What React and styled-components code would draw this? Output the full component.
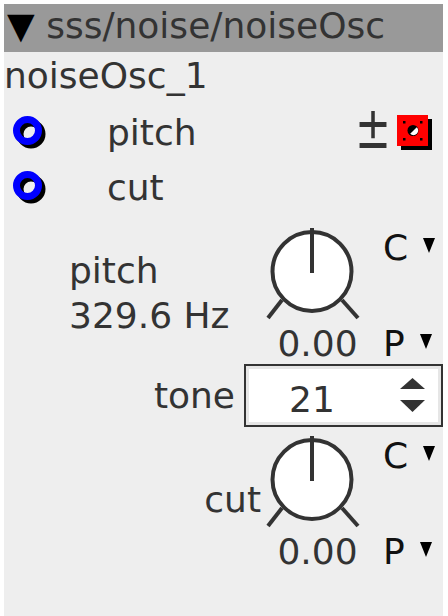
import React from "react";
import styled, { createGlobalStyle } from "styled-components";

const GlobalStyle = createGlobalStyle`
  html, body {
    margin: 0;
    padding: 0;
    background: #fff;
  }
  body {
    font-family: "DejaVu Sans", "Liberation Sans", sans-serif;
  }
`;

const Panel = styled.div`
  margin: 4px 0 0 4px;
  width: 439px;
  min-height: 612px;
  background: #eeeeee;
  color: #333;
  font-size: 36px;
  display: flex;
  flex-direction: column;
`;

const Header = styled.div`
  background: #999999;
  line-height: 43px;
  padding: 0 0 5px 3px;
  white-space: nowrap;
  span {
    color: #000;
  }
`;

const Name = styled.div`
  line-height: 40px;
  padding-top: 4px;
`;

const Ports = styled.div`
  margin-top: 9px;
`;

const PortRow = styled.div`
  height: 55px;
  display: flex;
  align-items: center;
  padding: 0 11px 0 9px;
`;

const PortLabel = styled.div`
  margin-left: 60px;
  line-height: 40px;
`;

const PortTools = styled.div`
  margin-left: auto;
  display: flex;
  align-items: center;
  gap: 6px;
`;

const PlusMinus = styled.span`
  display: inline-block;
  font-size: 43px;
  line-height: 40px;
  transform: scaleY(1.35);
  transform-origin: 50% 70%;
  margin-top: -4px;
`;

const KnobRow = styled.div`
  display: grid;
  grid-template-columns: 1fr 96px 83px;
  margin-top: ${(p) => p.$top}px;
`;

const KnobLabel = styled.div`
  align-self: start;
  line-height: ${(p) => p.$lh}px;
  padding-top: ${(p) => p.$pt}px;
  padding-left: ${(p) => p.$pl || 0}px;
  padding-right: ${(p) => p.$pr || 0}px;
  text-align: ${(p) => p.$align};
  white-space: nowrap;
`;

const KnobCol = styled.div`
  display: flex;
  flex-direction: column;
  svg {
    display: block;
  }
`;

const Value = styled.div`
  line-height: 40px;
  text-align: center;
  padding-left: 11px;
  white-space: nowrap;
`;

const Side = styled.div`
  display: flex;
  flex-direction: column;
  justify-content: space-between;
  padding-left: 23px;
`;

const Mode = styled.div`
  display: flex;
  align-items: flex-start;
  line-height: 40px;
  color: #111;
  svg {
    margin: 10px 0 0 15px;
  }
`;

const ToneRow = styled.div`
  display: flex;
  align-items: center;
  justify-content: flex-end;
  gap: 9px;
`;

const ToneLabel = styled.div`
  line-height: 40px;
`;

const NumberBox = styled.div`
  width: 199px;
  height: 63px;
  box-sizing: border-box;
  border: 2px solid #333;
  background: #fff;
  box-shadow: inset 0 0 0 3px #e6e6e6;
  display: flex;
  align-items: center;
`;

const NumberText = styled.div`
  width: 132px;
  text-align: center;
  line-height: 40px;
  padding-top: 8px;
`;

const Spinner = styled.svg`
  margin-left: 22px;
`;

const Tri = () => (
  <svg width="12" height="15" viewBox="0 0 12 15">
    <polygon points="0,0 12,0 6,15" fill="#000" />
  </svg>
);

const Port = () => (
  <svg width="34" height="34" viewBox="0 0 34 34">
    <circle cx="18" cy="18" r="11" fill="none" stroke="#000" strokeWidth="7" />
    <circle cx="14.5" cy="14.5" r="11" fill="none" stroke="#0000ff" strokeWidth="7" />
  </svg>
);

const Toggle = () => (
  <svg width="35" height="35" viewBox="0 0 35 35">
    <rect x="4" y="4" width="31" height="31" fill="#000" />
    <rect x="0" y="0" width="31" height="31" fill="#ff0000" />
    <rect x="6" y="6" width="2.5" height="2.5" fill="#000" />
    <rect x="23" y="6" width="2.5" height="2.5" fill="#000" />
    <rect x="6" y="23" width="2.5" height="2.5" fill="#000" />
    <rect x="23" y="23" width="2.5" height="2.5" fill="#000" />
    <circle cx="16" cy="15.5" r="5.5" fill="#000" />
    <path d="M19.8 12.2 A4 4 0 0 1 13.2 18.8 Z" fill="#fff" />
  </svg>
);

const Knob = () => (
  <svg width="96" height="96" viewBox="0 0 96 96">
    <circle cx="48" cy="43.5" r="39.5" fill="#fff" stroke="#333" strokeWidth="4" />
    <line x1="48" y1="0" x2="48" y2="45" stroke="#333" strokeWidth="4" />
    <line x1="18" y1="72" x2="4" y2="90" stroke="#333" strokeWidth="4" />
    <line x1="78" y1="72" x2="94" y2="90" stroke="#333" strokeWidth="4" />
  </svg>
);

const KnobBlock = ({ top, label }) => (
  <KnobRow $top={top}>
    {label}
    <KnobCol>
      <Knob />
      <Value>0.00</Value>
    </KnobCol>
    <Side>
      <Mode>
        C<Tri />
      </Mode>
      <Mode>
        P<Tri />
      </Mode>
    </Side>
  </KnobRow>
);

export default function App() {
  return (
    <>
      <GlobalStyle />
      <Panel>
        <Header>
          <span>▼</span> sss/noise/noiseOsc
        </Header>
        <Name>noiseOsc_1</Name>
        <Ports>
          <PortRow>
            <Port />
            <PortLabel>pitch</PortLabel>
            <PortTools>
              <PlusMinus>±</PlusMinus>
              <Toggle />
            </PortTools>
          </PortRow>
          <PortRow>
            <Port />
            <PortLabel>cut</PortLabel>
          </PortRow>
        </Ports>
        <KnobBlock
          top={13}
          label={
            <KnobLabel $lh={45} $pt={20} $pl={65} $align="left">
              pitch
              <br />
              329.6 Hz
            </KnobLabel>
          }
        />
        <ToneRow>
          <ToneLabel>tone</ToneLabel>
          <NumberBox>
            <NumberText>21</NumberText>
            <Spinner width="25" height="35" viewBox="0 0 25 35">
              <polygon points="12.5,0 25,11 0,11" fill="#333" />
              <polygon points="0,22 25,22 12.5,34" fill="#333" />
            </Spinner>
          </NumberBox>
        </ToneRow>
        <KnobBlock
          top={9}
          label={
            <KnobLabel $lh={40} $pt={44} $pr={3} $align="right">
              cut
            </KnobLabel>
          }
        />
      </Panel>
    </>
  );
}
